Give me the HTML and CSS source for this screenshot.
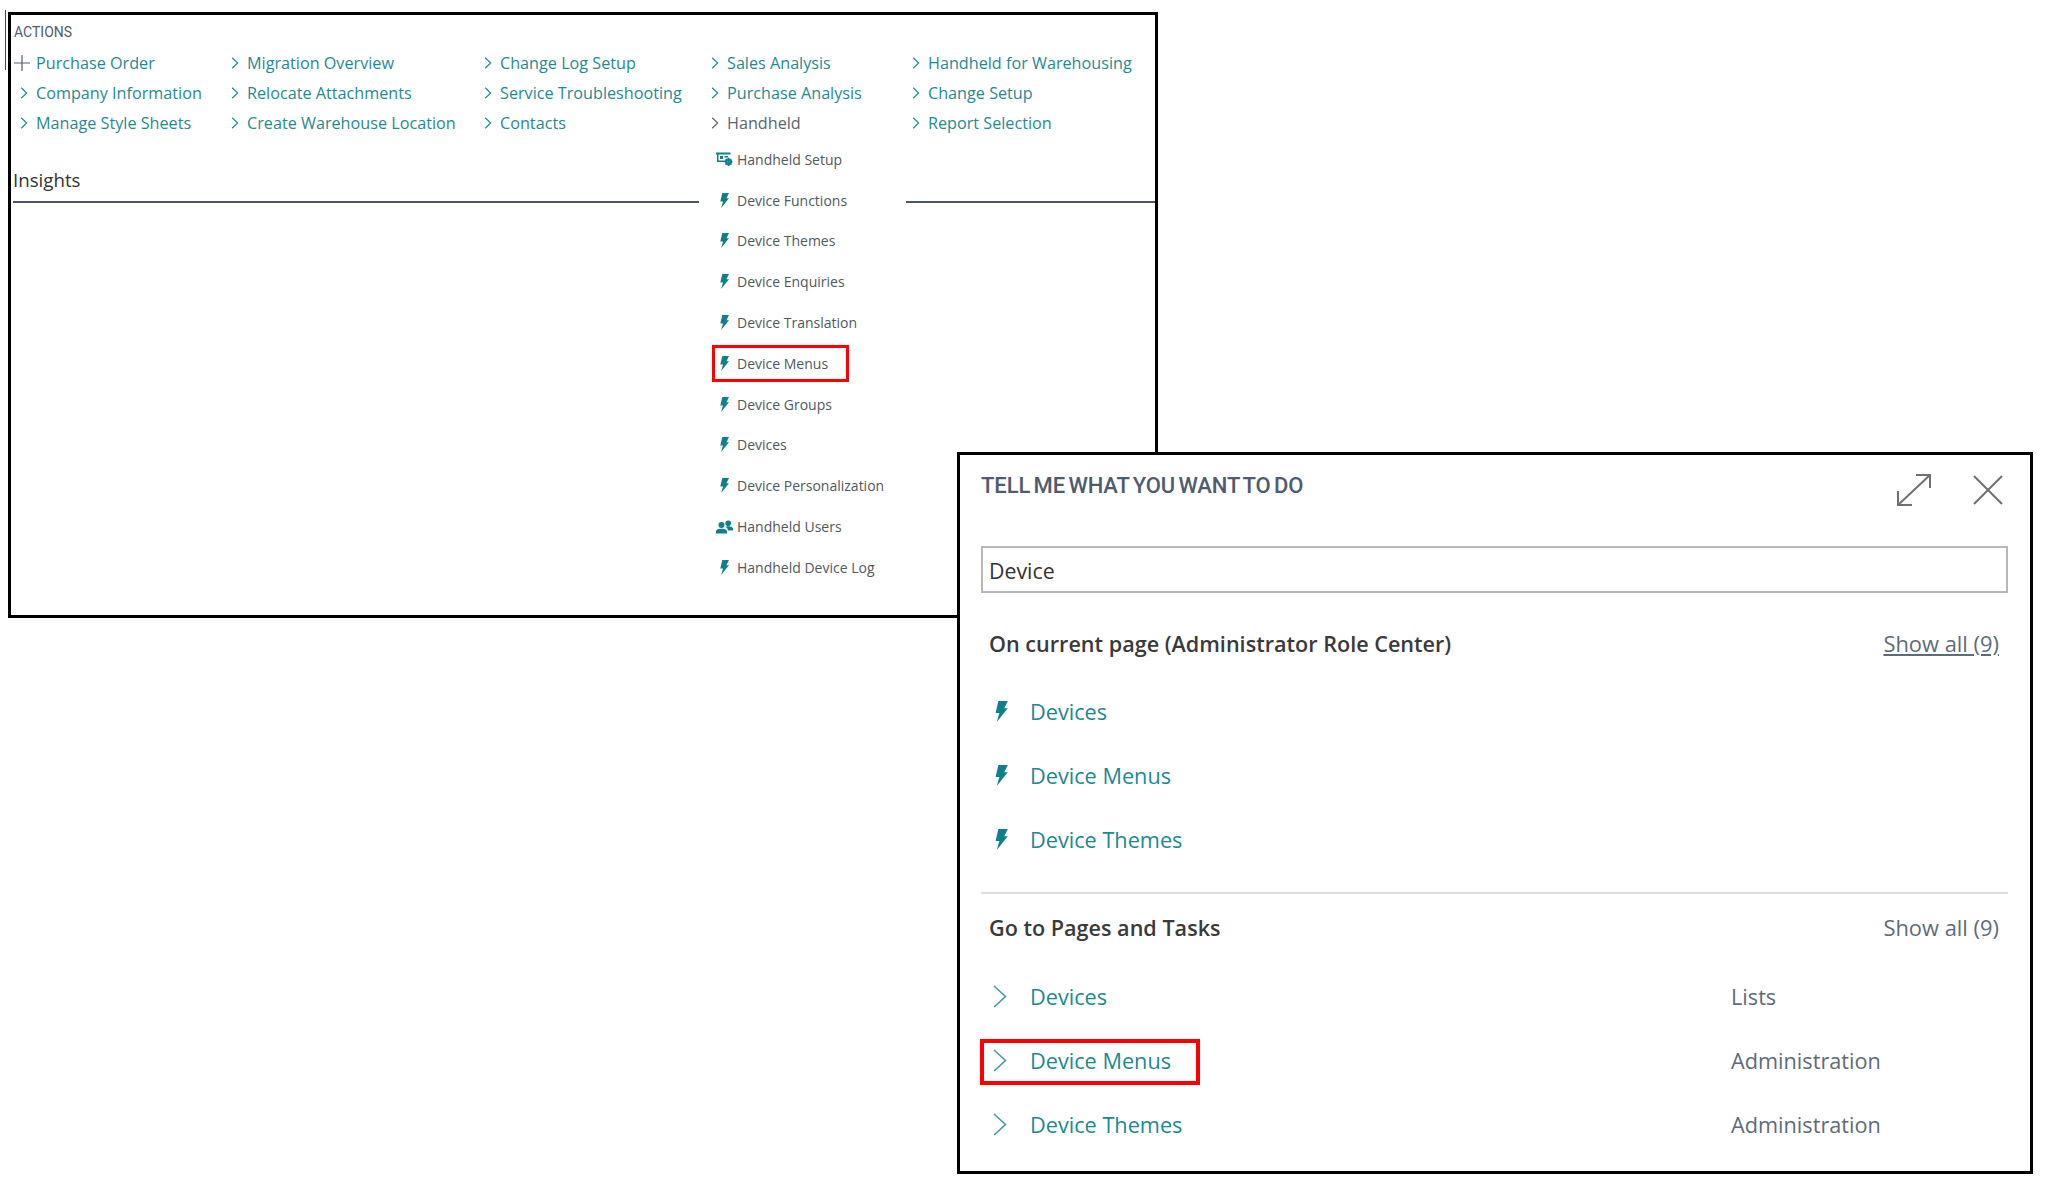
FILE: index.html
```html
<!DOCTYPE html>
<html lang="en">
<head>
<meta charset="UTF-8">
<meta name="viewport" content="width=device-width, initial-scale=1.0">
<title>Tell Me What You Want To Do</title>
<link rel="stylesheet" href="styles.css">
</head>
<body>
<svg class="icon-defs" width="0" height="0">
    <symbol id="chevron" viewBox="0 0 8 12"><path d="M1.2 0.8 L6.6 6 L1.2 11.2" fill="none" stroke="currentColor"/></symbol>
    <symbol id="chevron-big" viewBox="0 0 14 23"><path d="M1 1 L12.5 11.5 L1 22" fill="none" stroke="currentColor"/></symbol>
    <symbol id="bolt" viewBox="0 0 12 20"><path d="M3 0 H12 L8.6 7 H12 L1.5 20 L4 11.4 H0.4 Z" fill="currentColor"/></symbol>
</svg>

<div class="window role-center">
    <div class="section-label">ACTIONS</div>
    <div class="actions">
        <ul class="action-col col-a">
            <li><svg class="plus" viewBox="0 0 16 16"><path d="M8 0 V16 M0 8 H16" fill="none" stroke="currentColor" stroke-width="1.2"/></svg>Purchase Order</li>
            <li><svg class="chev"><use href="#chevron"/></svg>Company Information</li>
            <li><svg class="chev"><use href="#chevron"/></svg>Manage Style Sheets</li>
        </ul>
        <ul class="action-col col-b">
            <li><svg class="chev"><use href="#chevron"/></svg>Migration Overview</li>
            <li><svg class="chev"><use href="#chevron"/></svg>Relocate Attachments</li>
            <li><svg class="chev"><use href="#chevron"/></svg>Create Warehouse Location</li>
        </ul>
        <ul class="action-col col-c">
            <li><svg class="chev"><use href="#chevron"/></svg>Change Log Setup</li>
            <li><svg class="chev"><use href="#chevron"/></svg>Service Troubleshooting</li>
            <li><svg class="chev"><use href="#chevron"/></svg>Contacts</li>
        </ul>
        <ul class="action-col col-d">
            <li><svg class="chev"><use href="#chevron"/></svg>Sales Analysis</li>
            <li><svg class="chev"><use href="#chevron"/></svg>Purchase Analysis</li>
            <li class="open"><svg class="chev"><use href="#chevron"/></svg>Handheld</li>
        </ul>
        <ul class="action-col col-e">
            <li><svg class="chev"><use href="#chevron"/></svg>Handheld for Warehousing</li>
            <li><svg class="chev"><use href="#chevron"/></svg>Change Setup</li>
            <li><svg class="chev"><use href="#chevron"/></svg>Report Selection</li>
        </ul>
    </div>
    <h2 class="insights">Insights</h2>
    <div class="insights-rule"></div>

    <ul class="dropdown">
        <li>
            <span class="menu-icon">
                <svg class="wide" viewBox="0 0 17 14"><path d="M0 0.5 H14.5 V2.5 H0 Z M1 2.5 H2.5 V8.5 H9 V10 H1 Z M4 4 H7 V7 H4 Z M8.5 4 H12 V5.5 H8.5 Z" fill="currentColor"/><circle cx="12.5" cy="9.8" r="2.6" fill="none" stroke="currentColor" stroke-width="2"/><path d="M12.5 5.6 V14 M8.3 9.8 H16.7 M9.6 6.9 L15.4 12.7 M15.4 6.9 L9.6 12.7" stroke="currentColor" stroke-width="1"/></svg>
            </span>Handheld Setup
        </li>
        <li><span class="menu-icon"><svg class="bolt"><use href="#bolt"/></svg></span>Device Functions</li>
        <li><span class="menu-icon"><svg class="bolt"><use href="#bolt"/></svg></span>Device Themes</li>
        <li><span class="menu-icon"><svg class="bolt"><use href="#bolt"/></svg></span>Device Enquiries</li>
        <li><span class="menu-icon"><svg class="bolt"><use href="#bolt"/></svg></span>Device Translation</li>
        <li class="marked"><span class="menu-icon"><svg class="bolt"><use href="#bolt"/></svg></span>Device Menus</li>
        <li><span class="menu-icon"><svg class="bolt"><use href="#bolt"/></svg></span>Device Groups</li>
        <li><span class="menu-icon"><svg class="bolt"><use href="#bolt"/></svg></span>Devices</li>
        <li><span class="menu-icon"><svg class="bolt"><use href="#bolt"/></svg></span>Device Personalization</li>
        <li>
            <span class="menu-icon">
                <svg class="wide" viewBox="0 0 17 13"><circle cx="5.5" cy="4.6" r="3" fill="currentColor"/><path d="M0 13 V11.2 C0 9 2.4 8.2 5.5 8.2 C8.6 8.2 11 9 11 11.2 V13 Z" fill="currentColor"/><circle cx="12.2" cy="2.8" r="2.8" fill="currentColor"/><path d="M9.6 6.2 C13 5.2 17 6 17 8.4 V10 H12 C11.8 8.4 11 7 9.6 6.2 Z" fill="currentColor"/></svg>
            </span>Handheld Users
        </li>
        <li><span class="menu-icon"><svg class="bolt"><use href="#bolt"/></svg></span>Handheld Device Log</li>
    </ul>
</div>
<div class="crop-line"></div>

<div class="window tell-me">
    <div class="tell-head">
        <h1 class="tell-title">TELL ME WHAT YOU WANT TO DO</h1>
        <svg class="tool expand" viewBox="0 0 36 34"><path d="M2 32 L34 2 M20 2 H34 V15 M2 18 V32 H16" fill="none" stroke="currentColor" stroke-width="2"/></svg>
        <svg class="tool close" viewBox="0 0 30 30"><path d="M1 1 L29 29 M29 1 L1 29" fill="none" stroke="currentColor" stroke-width="2"/></svg>
    </div>
    <div class="search-box">Device</div>

    <div class="result-head">
        <span class="result-title">On current page (Administrator Role Center)</span>
        <span class="show-all linked">Show all (9)</span>
    </div>
    <ul class="results">
        <li><span class="result-icon"><svg class="bolt-big"><use href="#bolt"/></svg></span><span class="result-name">Devices</span></li>
        <li><span class="result-icon"><svg class="bolt-big"><use href="#bolt"/></svg></span><span class="result-name">Device Menus</span></li>
        <li><span class="result-icon"><svg class="bolt-big"><use href="#bolt"/></svg></span><span class="result-name">Device Themes</span></li>
    </ul>
    <hr class="divider">

    <div class="result-head second">
        <span class="result-title">Go to Pages and Tasks</span>
        <span class="show-all">Show all (9)</span>
    </div>
    <ul class="results">
        <li><span class="result-icon"><svg class="chev-big"><use href="#chevron-big"/></svg></span><span class="result-name">Devices</span><span class="result-cat">Lists</span></li>
        <li class="marked"><span class="result-icon"><svg class="chev-big"><use href="#chevron-big"/></svg></span><span class="result-name">Device Menus</span><span class="result-cat">Administration</span></li>
        <li><span class="result-icon"><svg class="chev-big"><use href="#chevron-big"/></svg></span><span class="result-name">Device Themes</span><span class="result-cat">Administration</span></li>
    </ul>
</div>
</body>
</html>
```

FILE: styles.css
```css
body {
    margin: 0;
    background-color: white;
    font-family: "Open Sans", "Noto Sans", sans-serif;
    color: #333;
}

ul {
    list-style: none;
    margin: 0;
    padding: 0;
}

.icon-defs {
    position: absolute;
}

.window {
    position: absolute;
    box-sizing: border-box;
    background-color: white;
    border: 3px solid black;
}

.role-center {
    left: 8px;
    top: 12px;
    width: 1150px;
    height: 606px;
}

/* stray edge of the cropped screenshot */
.crop-line {
    position: absolute;
    left: 5px;
    top: 10px;
    width: 1px;
    height: 60px;
    background-color: #444;
}

.section-label {
    padding: 7px 0 0 3px;
    height: 20px;
    line-height: 20px;
    font-family: "Roboto", sans-serif;
    font-size: 14px;
    color: #505c6d;
}

.actions {
    display: flex;
    margin-top: 6px;
    padding-left: 6px;
}

.action-col li {
    display: flex;
    align-items: center;
    height: 30px;
    font-size: 16.2px;
    color: #1f8a92;
    white-space: nowrap;
}

.col-a { width: 211px; }
.col-b { width: 253px; }
.col-c { width: 227px; }
.col-d { width: 201px; }

.action-col li.open {
    color: #5a6570;
}

.chev {
    flex: none;
    width: 8px;
    height: 12px;
    margin: 0 8px 0 3px;
    color: #1f8a92;
    stroke-width: 1.2;
}

.open .chev {
    color: #5a6570;
}

.plus {
    flex: none;
    width: 16px;
    height: 16px;
    margin: 0 6px 0 -3px;
    color: #55606c;
}

.insights {
    margin: 30px 0 0 2px;
    height: 24px;
    line-height: 24px;
    font-size: 18.7px;
    font-weight: 400;
    color: #333;
}

.insights-rule {
    height: 2px;
    margin: 9px 0 0 2px;
    background-color: #4a5568;
}

.dropdown {
    position: absolute;
    left: 688px;
    top: 124px;
    width: 207px;
    padding-bottom: 4px;
    background-color: white;
}

.dropdown li {
    position: relative;
    display: flex;
    align-items: center;
    height: 40.8px;
    font-size: 14px;
    color: #505860;
    white-space: nowrap;
}

.menu-icon {
    display: flex;
    justify-content: center;
    width: 17px;
    margin: 0 4px 0 17px;
    color: #0f7f88;
}

.wide {
    width: 17px;
    height: 14px;
}

.bolt {
    width: 9px;
    height: 15px;
}

.dropdown .marked::after {
    content: "";
    position: absolute;
    left: 13px;
    top: 2px;
    width: 137px;
    height: 37px;
    box-sizing: border-box;
    border: 3px solid #f00;
}

.tell-me {
    left: 957px;
    top: 452px;
    width: 1076px;
    height: 722px;
    padding: 0 22px 0 21px;
}

.tell-head {
    display: flex;
    align-items: flex-start;
    height: 91px;
}

.tell-title {
    flex: 1;
    margin: 18px 0 0;
    line-height: 26px;
    font-family: "Roboto", sans-serif;
    font-size: 22px;
    font-weight: 500;
    letter-spacing: -0.1px;
    word-spacing: -2px;
    color: #505c6d;
}

.tool {
    flex: none;
    color: #707070;
}

.expand {
    width: 36px;
    height: 34px;
    margin-top: 18px;
    margin-right: 41px;
}

.close {
    width: 30px;
    height: 30px;
    margin-top: 20px;
    margin-right: 5px;
}

.search-box {
    box-sizing: border-box;
    height: 47px;
    line-height: 46px;
    padding-left: 6px;
    border: 2px solid #b8b8b8;
    font-size: 21.3px;
    color: #333;
}

.result-head {
    display: flex;
    justify-content: space-between;
    align-items: center;
    height: 32px;
    margin-top: 34px;
    padding: 0 9px 0 8px;
}

.result-head.second {
    margin-top: 18px;
}

.result-title {
    font-size: 21.6px;
    font-weight: 600;
    color: #3a3a3a;
}

.show-all {
    font-size: 21.9px;
    color: #5f6b78;
}

.show-all.linked {
    text-decoration: underline;
}

.results {
    margin-top: 20px;
}

.results li {
    position: relative;
    display: flex;
    align-items: center;
    height: 64.3px;
    padding-left: 12px;
    font-size: 21.7px;
}

.result-icon {
    display: flex;
    flex: none;
    width: 37px;
    color: #0f7f88;
}

.bolt-big {
    width: 13px;
    height: 21px;
    margin-left: 2px;
}

.chev-big {
    width: 14px;
    height: 23px;
    color: #3f9ea3;
    stroke-width: 1.6;
}

.result-name {
    width: 701px;
    color: #1a8a8f;
}

.result-cat {
    color: #5f6b78;
}

.results .marked::after {
    content: "";
    position: absolute;
    left: -1px;
    top: 11px;
    width: 220px;
    height: 46px;
    box-sizing: border-box;
    border: 4px solid #f00;
}

.divider {
    height: 2px;
    margin: 20px 0 0;
    border: none;
    background-color: #ddd;
}
```
